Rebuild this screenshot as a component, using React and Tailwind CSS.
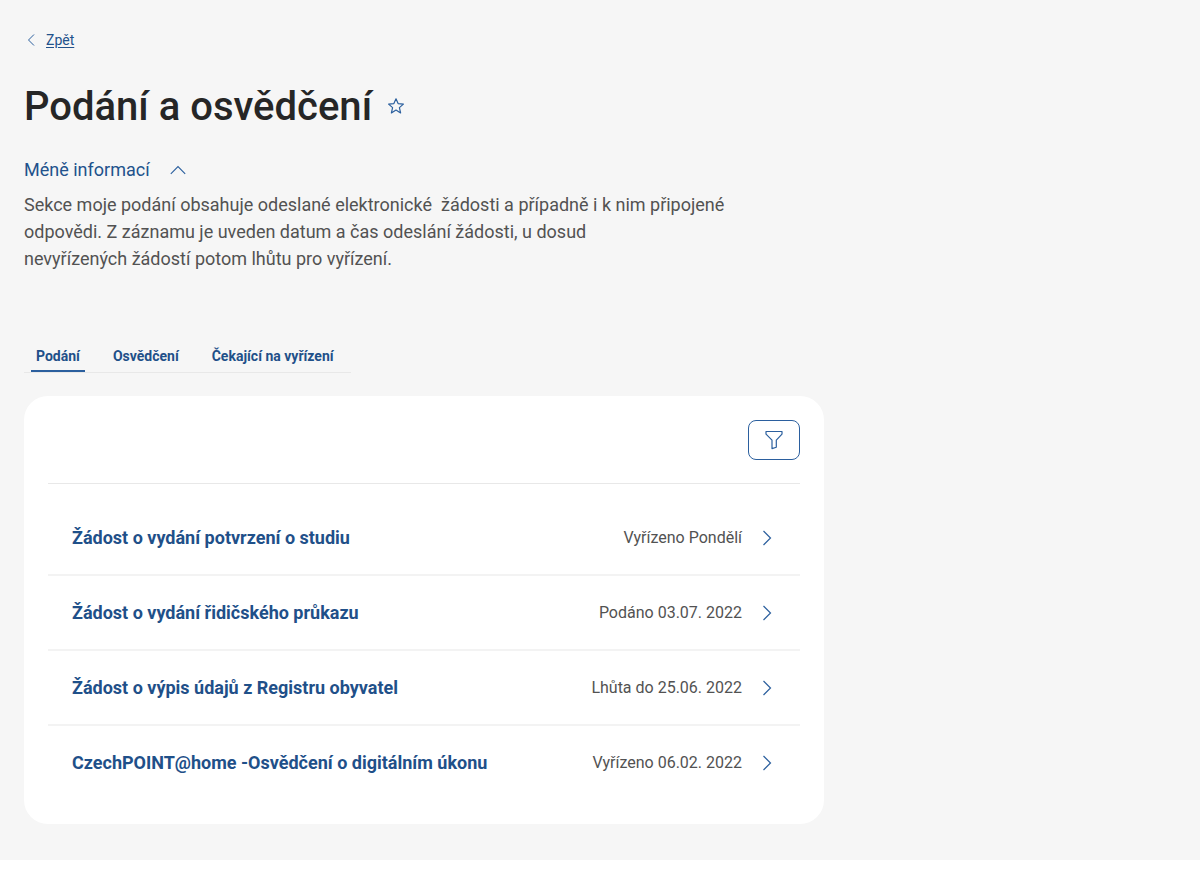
import React, { useState } from "react";

const tabs = ["Podání", "Osvědčení", "Čekající na vyřízení"];

const submissions = [
  { title: "Žádost o vydání potvrzení o studiu", status: "Vyřízeno Pondělí" },
  { title: "Žádost o vydání řidičského průkazu", status: "Podáno 03.07. 2022" },
  { title: "Žádost o výpis údajů z Registru obyvatel", status: "Lhůta do 25.06. 2022" },
  { title: "CzechPOINT@home -Osvědčení o digitálním úkonu", status: "Vyřízeno 06.02. 2022" },
];

function Icon({ className, viewBox, children }) {
  return (
    <svg className={className} viewBox={viewBox} fill="none" stroke="#2b5f9e" aria-hidden="true">
      {children}
    </svg>
  );
}

function BackLink() {
  return (
    <a href="#zpet" className="flex w-fit items-center gap-2 text-sm text-[#22528c]">
      <Icon className="h-4 w-3.5" viewBox="0 0 14 16">
        <path d="M10 2.5 4.5 8l5.5 5.5" />
      </Icon>
      <span className="underline underline-offset-2">Zpět</span>
    </a>
  );
}

function Heading() {
  return (
    <div className="flex items-center gap-4">
      <h1 className="pt-0.5 text-[40px] leading-[48px] font-medium text-[#262626]">Podání a osvědčení</h1>
      <button type="button" aria-label="Přidat k oblíbeným">
        <Icon className="h-4 w-4" viewBox="0 0 16 16">
          <path
            d="M8 .8 10.1 5.6 15.4 6.1 11.4 9.6 12.6 14.9 8 12.1 3.4 14.9 4.6 9.6.6 6.1 5.9 5.6Z"
            strokeWidth="1.2"
            strokeLinejoin="round"
          />
        </Icon>
      </button>
    </div>
  );
}

function Tabs({ active, onSelect }) {
  return (
    <div role="tablist" className="flex w-fit gap-[23px] border-b border-[#e8e8e8] pr-3 pl-[7px]">
      {tabs.map((tab) => (
        <button
          key={tab}
          type="button"
          role="tab"
          aria-selected={tab === active}
          onClick={() => onSelect(tab)}
          className={
            "border-b-2 px-[5px] pt-1.5 pb-1 text-sm leading-5 font-bold text-[#1f5089] " +
            (tab === active ? "border-[#2b5f9e]" : "border-transparent")
          }
        >
          {tab}
        </button>
      ))}
    </div>
  );
}

function SubmissionRow({ title, status }) {
  return (
    <li className="border-b-2 border-[#f3f3f3] last:border-b-0">
      <a href="#detail" className="flex h-[73px] items-center justify-between gap-4 px-6">
        <span className="text-lg font-bold text-[#1f5089]">{title}</span>
        <span className="flex shrink-0 items-center gap-4 text-base text-[#525252]">
          {status}
          <Icon className="h-4 w-[18px]" viewBox="0 0 18 16">
            <path d="M5.5 1 12.5 8l-7 7" strokeWidth="1.2" />
          </Icon>
        </span>
      </a>
    </li>
  );
}

export default function App() {
  const [active, setActive] = useState(tabs[0]);
  const [open, setOpen] = useState(true);

  return (
    <main className="bg-[#f6f6f6] px-6 pt-[30px] pb-9 font-[Roboto,sans-serif]">
      <BackLink />
      <div className="mt-[31px]">
        <Heading />
      </div>
      <button
        type="button"
        aria-expanded={open}
        onClick={() => setOpen(!open)}
        className="mt-[25px] flex items-center gap-[19px] text-lg text-[#22528c]"
      >
        Méně informací
        <Icon className="h-4 w-[18px]" viewBox="0 0 18 16">
          <path d="M1.8 11.8 9 4.5l7.2 7.3" strokeWidth="1.1" />
        </Icon>
      </button>
      {open && (
        <p className="mt-[7px] max-w-[740px] text-lg leading-[27px] text-[#525252]">
          Sekce moje podání obsahuje odeslané elektronické &nbsp;žádosti a případně i k nim připojené
          <br />
          odpovědi. Z záznamu je uveden datum a čas odeslání žádosti, u dosud
          <br />
          nevyřízených žádostí potom lhůtu pro vyřízení.
        </p>
      )}
      <div className="mt-[68px]">
        <Tabs active={active} onSelect={setActive} />
      </div>
      <section className="mt-[23px] max-w-[800px] rounded-3xl bg-white p-6">
        <div className="flex justify-end border-b border-[#e8e8e8] pb-[23px]">
          <button
            type="button"
            aria-label="Filtrovat"
            className="flex h-10 w-[52px] items-center justify-center rounded-lg border border-[#2b5f9e]"
          >
            <Icon className="h-5 w-5" viewBox="0 0 20 20">
              <path d="M2 1.5h16v2.6L12.3 10.2v7L8 18.6v-8.4L2 4.1Z" strokeWidth="1.2" strokeLinejoin="round" />
            </Icon>
          </button>
        </div>
        <ul className="pt-[17px] pb-px">
          {submissions.map((item) => (
            <SubmissionRow key={item.title} {...item} />
          ))}
        </ul>
      </section>
    </main>
  );
}
